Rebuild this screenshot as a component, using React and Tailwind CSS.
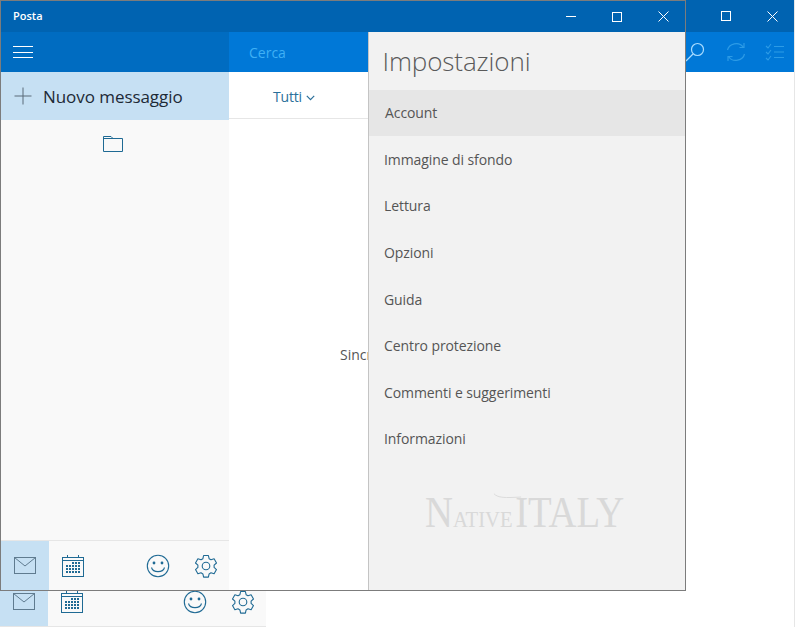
function Mail({ cls }) {
  return (
    <svg width="24" height="18" viewBox="0 0 24 18" fill="none" stroke="#5f7b8f" strokeWidth="1" className={cls}>
      <rect x="1.5" y="0.5" width="21" height="16" />
      <path d="M1.5 0.5 L12 9 L22.5 0.5" />
    </svg>
  );
}
function Cal() {
  const dots = [];
  for (let r = 0; r < 4; r++) for (let c = 0; c < 5; c++) {
    if (r === 0 && c < 2) continue;
    dots.push(<rect key={r + "-" + c} x={5 + c * 3} y={8 + r * 3} width="2" height="2" fill="#1f6a94" stroke="none" />);
  }
  return (
    <svg width="24" height="24" viewBox="0 0 24 24" fill="none" stroke="#1f6a94" strokeWidth="1">
      <rect x="1.5" y="3.5" width="21" height="19" />
      <path d="M1.5 6.5 H22.5 M6.5 1 V4 M17.5 1 V4" />
      {dots}
    </svg>
  );
}
function Smile() {
  return (
    <svg width="24" height="24" viewBox="0 0 24 24" fill="none" stroke="#1f6a94" strokeWidth="1.1">
      <circle cx="12" cy="12" r="10.7" />
      <circle cx="8" cy="9" r="1.4" fill="#1f6a94" stroke="none" />
      <circle cx="16" cy="9" r="1.4" fill="#1f6a94" stroke="none" />
      <path d="M5.5 13.5 C7 19 17 19 18.5 13.5" />
    </svg>
  );
}
function Gear() {
  return (
    <svg width="24" height="24" viewBox="0 0 24 24" fill="none" stroke="#1f6a94" strokeWidth="1.1">
      <path d="M9.6 1.5 h4.8 l0.7 3.2 l1.9 1.1 l3.1 -1 l2.4 4.2 l-2.4 2.2 v2.2 l2.4 2.2 l-2.4 4.2 l-3.1 -1 l-1.9 1.1 l-0.7 3.2 h-4.8 l-0.7 -3.2 l-1.9 -1.1 l-3.1 1 l-2.4 -4.2 l2.4 -2.2 v-2.2 l-2.4 -2.2 l2.4 -4.2 l3.1 1 l1.9 -1.1 z" strokeLinejoin="round" />
      <circle cx="12" cy="12" r="3.8" />
    </svg>
  );
}
function WinBtns({ min }) {
  return (
    <div className="flex items-center -mr-px">
      {min && (
        <div className="w-[46px] h-8 flex items-center justify-center">
          <div className="w-[10px] h-px bg-white"></div>
        </div>
      )}
      <div className="w-[46px] h-8 flex items-center justify-center">
        <div className="w-[10px] h-[10px] border border-white"></div>
      </div>
      <div className="w-[46px] h-8 flex items-center justify-center">
        <svg width="11" height="11" viewBox="0 0 11 11" stroke="#fff" strokeWidth="1"><path d="M0.5 0.5 L10.5 10.5 M10.5 0.5 L0.5 10.5" /></svg>
      </div>
    </div>
  );
}
function BottomNav() {
  return (
    <div className="flex items-center h-[49px] bg-[#f9f9f9]">
      <div className="w-12 h-full bg-[#c6e0f3] flex items-center justify-center"><Mail /></div>
      <div className="w-12 h-full flex items-center justify-center"><Cal /></div>
      <div className="ml-auto flex">
        <div className="w-[47px] flex justify-center pr-[2px]"><Smile /></div>
        <div className="w-[47px] flex justify-center"><Gear /></div>
      </div>
    </div>
  );
}
const items = ["Immagine di sfondo", "Lettura", "Opzioni", "Guida", "Centro protezione", "Commenti e suggerimenti", "Informazioni"];

export default function App() {
  return (
    <div className="relative w-[795px] h-[627px] overflow-hidden bg-white font-['Open_Sans','Noto_Sans',sans-serif]">
      {/* back window */}
      <div className="flex flex-col h-full border-r border-[#e6e6e6]">
        <div className="h-8 bg-[#0063b1] flex justify-end"><WinBtns /></div>
        <div className="h-10 bg-[#0078d7] flex justify-end items-center">
          <div className="w-[46px] flex justify-center pl-[3px]">
            <svg width="20" height="20" viewBox="0 0 20 20" fill="none" stroke="#a8dcff" strokeWidth="1.2"><circle cx="12.5" cy="7.5" r="6" /><path d="M8 12 L1 19" /></svg>
          </div>
          <div className="w-[42px] flex justify-center pr-[2px]">
            <svg width="20" height="20" viewBox="0 0 20 20" fill="none" stroke="#2c9be6" strokeWidth="1.2"><path d="M1.5 8 C3 1.5 13 -1 17 5 M18 1 V5.5 H13.5 M18.5 12 C17 18.5 7 21 3 15 M2 19 V14.5 H6.5" /></svg>
          </div>
          <div className="w-[34px] flex justify-center mr-[2px]">
            <svg width="20" height="18" viewBox="0 0 20 18" fill="none" stroke="#2c9be6" strokeWidth="1.1"><path d="M1 3 L3 5 L6 1 M9 3.5 H19 M1 9 L3 11 L6 7 M9 9 H19 M1 15 L3 17 L6 13 M9 14.5 H19" /></svg>
          </div>
        </div>
        <div className="flex-1"></div>
        <div className="w-[266px] border-b border-[#e6e6e6]"><BottomNav /></div>
      </div>

      {/* front window */}
      <div className="absolute left-0 top-0 w-[686px] h-[591px] flex flex-col border border-[#7c7c7c] bg-white">
        <div className="h-[31px] bg-[#0063b1] flex justify-between items-center shrink-0">
          <span className="ml-3 text-[11px] font-semibold text-white">Posta</span>
          <WinBtns min />
        </div>
        <div className="flex flex-1 min-h-0">
          <div className="w-[228px] flex flex-col bg-[#f9f9f9] shrink-0">
            <div className="h-10 bg-[#006cc1] flex items-center pl-3">
              <div className="w-5 flex flex-col gap-[4.5px]">
                <div className="h-px bg-white"></div>
                <div className="h-px bg-white"></div>
                <div className="h-px bg-white"></div>
              </div>
            </div>
            <div className="h-12 bg-[#c6e0f3] flex items-center">
              <svg className="ml-[13px]" width="18" height="18" viewBox="0 0 18 18" stroke="#5b6b78" strokeWidth="1"><path d="M9 0.5 V17.5 M0.5 9 H17.5" /></svg>
              <span className="ml-[11px] pt-[2px] text-[17px] tracking-[-0.06px] text-[#1d2a36]">Nuovo messaggio</span>
            </div>
            <div className="flex justify-center pt-[15px] pr-[5px] flex-1">
              <svg width="22" height="18" viewBox="0 0 22 18" fill="none" stroke="#1f6a94" strokeWidth="1"><path d="M1.5 16.5 V1.5 H9 L11 3.5 H20.5 V16.5 Z M1.5 3.5 H11" /></svg>
            </div>
            <div className="border-t border-[#e6e6e6]"><BottomNav /></div>
          </div>
          <div className="flex-1 flex flex-col min-w-0">
            <div className="h-10 bg-[#0078d7] flex items-center pl-5 text-[14px] text-[#3fb0f5]">Cerca</div>
            <div className="h-[47px] border-b border-[#e6e6e6] flex items-center pl-11 pt-[3px] text-[14px] tracking-[-0.2px] text-[#2a6f9a]">
              Tutti
              <svg className="ml-1 mt-[2px]" width="9" height="6" viewBox="0 0 9 6" fill="none" stroke="#2a6f9a" strokeWidth="1.2"><path d="M0.8 0.8 L4.5 4.6 L8.2 0.8" /></svg>
            </div>
            <div className="flex-1 flex items-center pl-[111px] text-[14px] text-[#555]">Sincr</div>
          </div>
        </div>

        {/* settings flyout */}
        <div className="absolute left-[367px] top-[31px] bottom-0 right-0 bg-[#f2f2f2] border-l border-[#c4c4c4] flex flex-col">
          <div className="h-[58px] flex items-center pl-[13.5px] pt-px text-[26px] tracking-[-0.1px] text-[#5a5a5a] font-light">Impostazioni</div>
          <div className="h-[46px] bg-[#e6e6e6] flex items-center pl-4 pb-[2px] text-[14px] tracking-[-0.09px] text-[#555]">Account</div>
          {items.map((t) => (
            <div key={t} className="h-[46.6px] flex items-center pl-[15px] text-[14px] tracking-[-0.09px] text-[#555]">{t}</div>
          ))}
          <div className="relative mt-[28px] ml-[56px] flex items-baseline origin-left scale-x-[0.86] font-['Liberation_Serif',serif] text-[#d9d9d9] leading-none">
            <span className="text-[45px]">N</span>
            <span className="text-[24px]">ATIVE</span>
            <span className="text-[45px] ml-[3px]">ITALY</span>
            <svg className="absolute left-[80px] top-[3px]" width="32" height="8" viewBox="0 0 32 8" fill="none" stroke="#d9d9d9" strokeWidth="1"><path d="M0 0.5 C4 5 14 5 32 4" /></svg>
          </div>
        </div>
      </div>
    </div>
  );
}
